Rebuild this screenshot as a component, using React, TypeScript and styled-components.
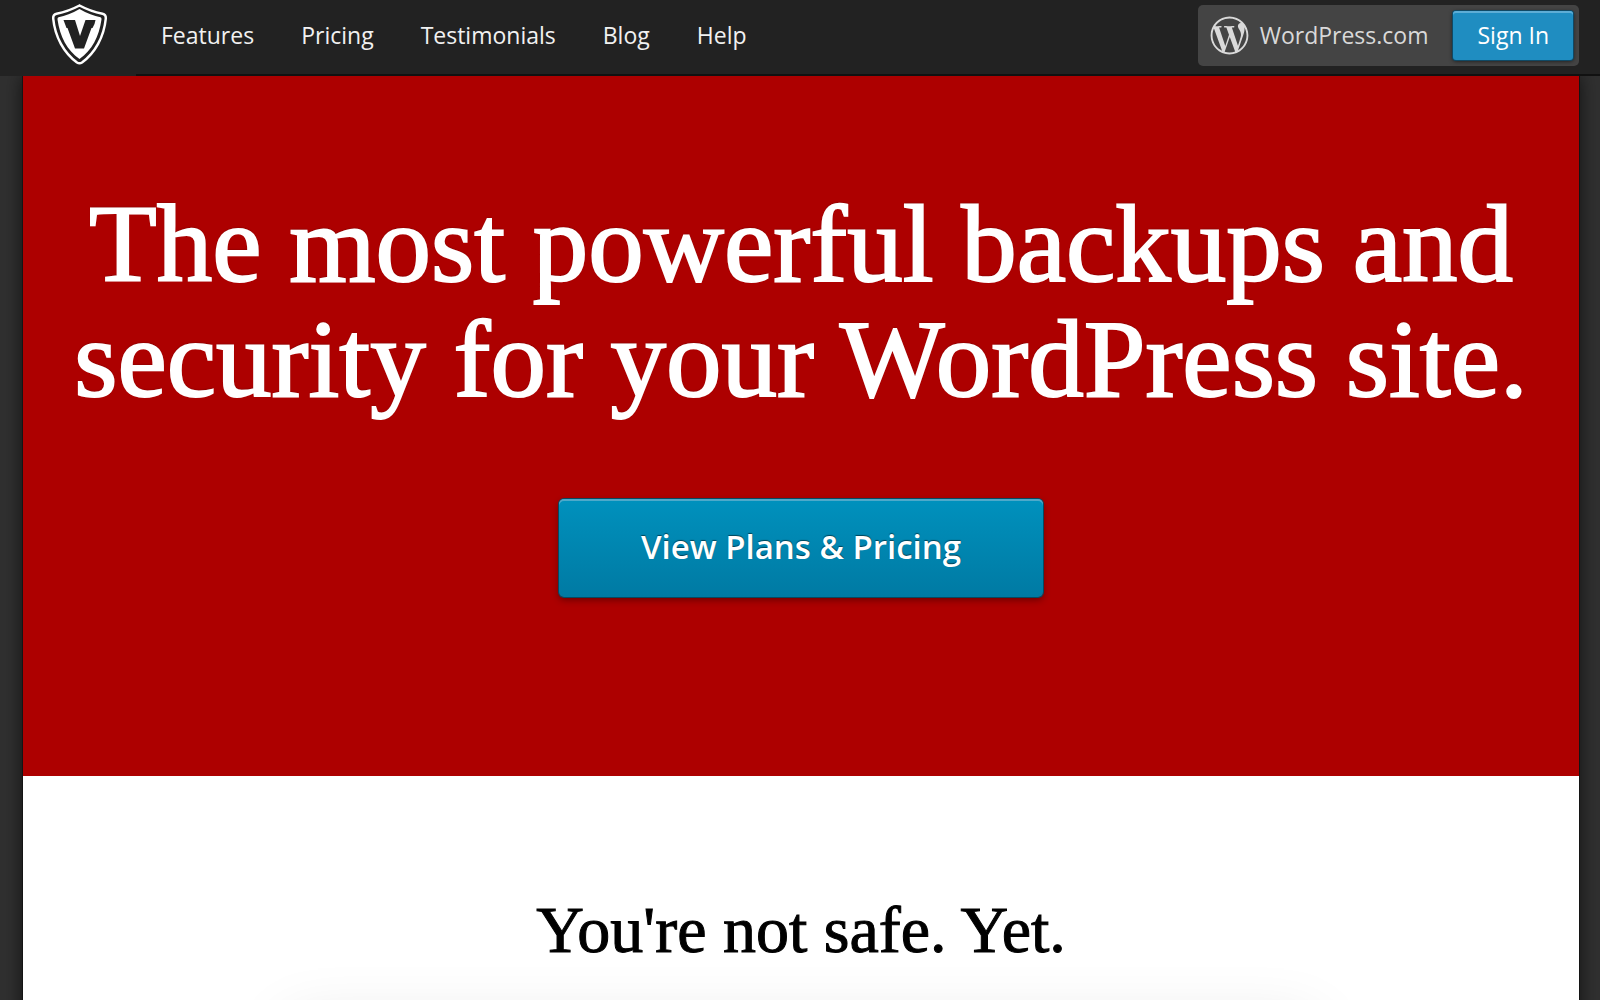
import React from "react";
import styled, { createGlobalStyle } from "styled-components";
import { FaWordpressSimple } from "react-icons/fa";

const sans = `"Open Sans", "Noto Sans", sans-serif`;
const serif = `"Liberation Serif", "Times New Roman", serif`;

const GlobalStyle = createGlobalStyle`
  *, *::before, *::after { box-sizing: border-box; }
  body {
    margin: 0;
    background: #303030;
    font-family: ${sans};
  }
`;

const Page = styled.div`
  display: flex;
  flex-direction: column;
  height: 100vh;
  overflow: hidden;
`;

const Header = styled.header`
  display: flex;
  flex: none;
  align-items: flex-start;
  height: 76px;
  background: #222;
`;

const LogoLink = styled.a`
  display: flex;
  flex: none;
  width: 136px;
  height: 76px;
  padding: 4px 0 0 51px;
`;

const Bar = styled.div`
  display: flex;
  flex: 1;
  justify-content: space-between;
  height: 76px;
  padding-right: 21px;
  border-bottom: 2px solid #111;
`;

const Nav = styled.nav`
  display: flex;
  gap: 47px;
  padding-left: 25px;
`;

const NavLink = styled.a`
  color: #f1f1f1;
  font-size: 23px;
  line-height: 70px;
  text-decoration: none;
`;

const Account = styled.div`
  display: flex;
  align-items: center;
  gap: 11px;
  height: 61px;
  margin-top: 5px;
  padding: 0 6px 0 12px;
  border-radius: 5px;
  background: #444;
  color: #d9d9d9;
  font-size: 23px;
  line-height: 32px;
`;

const AccountName = styled.span`
  padding-bottom: 2px;
`;

const SignIn = styled.button`
  height: 49px;
  margin-left: 14px;
  padding: 0 24px 2px;
  border: 0;
  border-radius: 3px;
  background: #1f8dc1;
  box-shadow: inset 0 2px 0 #5cadd6, 0 0 0 1px #0f4965, 0 1px 4px rgba(0, 0, 0, 0.7);
  color: #fff;
  font: 400 23px/46px ${sans};
  cursor: pointer;
`;

const Panel = styled.main`
  flex: 1;
  margin: 0 21px 0 23px;
  background: #fff;
  box-shadow: 0 0 0 1px #141414, 0 0 18px rgba(0, 0, 0, 0.7);
  clip-path: inset(0 -24px);
  text-align: center;
`;

const Hero = styled.section`
  height: 700px;
  padding: 110px 24px 0;
  background: #ad0000;
`;

const Title = styled.h1`
  margin: 0 0 83px;
  color: #fff;
  font: 400 111px/115px ${serif};
  -webkit-text-stroke: 2px #fff;
  text-shadow: 0 -1px 2px rgba(0, 0, 0, 0.4);
`;

const PlansButton = styled.button`
  height: 98px;
  padding: 0 82px 2px;
  border: 0;
  border-radius: 5px;
  background: linear-gradient(#0091bd, #007aa3);
  box-shadow: inset 0 2px 0 #4da9ca, 0 0 0 1px #064a61, 0 3px 7px rgba(0, 0, 0, 0.4);
  color: #fff;
  font: 600 33px/94px ${sans};
  text-shadow: 0 -1px 1px rgba(0, 0, 0, 0.5);
  cursor: pointer;
`;

const Safety = styled.section`
  padding: 114px 24px 0;
`;

const Subtitle = styled.h2`
  margin: 0;
  color: #000;
  font: 400 66px/80px ${serif};
  -webkit-text-stroke: 1px #000;
`;

const Showcase = styled.div`
  width: 68%;
  height: 400px;
  margin: 54px auto 0;
  background: #fff;
  box-shadow: 0 0 60px rgba(0, 0, 0, 0.12);
`;

const Shield = () => (
  <svg width="58" height="62" viewBox="0 0 58 62" aria-hidden="true">
    <path
      d="M28.500 1.500 C20 6 12 8.500 5.500 9.800 Q2 10.500 2.200 14.500 C4 33 13 49 26 58.500 Q28.500 60 31 58.500 C44 49 53 33 54.800 14.500 Q55 10.500 51.500 9.800 C45 8.500 37 6 28.500 1.500Z"
      fill="#222"
      stroke="#fff"
      strokeWidth="2.500"
    />
    <path
      d="M28.500 5 C21 9.500 14 11.800 7.500 13.200 Q6.300 13.600 6.500 15.500 C9 33 16 46 28.500 55 C41 46 48 33 50.500 15.500 Q50.700 13.600 49.500 13.200 C43 11.800 36 9.500 28.500 5Z"
      fill="#fff"
    />
    <path
      d="M12.500 16 H24 L29 32 L34.500 16 H44.500 L43.500 20 L41.500 24 H40.500 L33 44.500 H24 L16.500 24 H15.500 L14 20Z"
      fill="#222"
    />
  </svg>
);

const links = ["Features", "Pricing", "Testimonials", "Blog", "Help"];

export default function App() {
  return (
    <Page>
      <GlobalStyle />
      <Header>
        <LogoLink href="#" aria-label="Home">
          <Shield />
        </LogoLink>
        <Bar>
          <Nav>
            {links.map((label) => (
              <NavLink key={label} href="#">
                {label}
              </NavLink>
            ))}
          </Nav>
          <Account>
            <FaWordpressSimple size={39} aria-hidden="true" />
            <AccountName>WordPress.com</AccountName>
            <SignIn type="button">Sign In</SignIn>
          </Account>
        </Bar>
      </Header>
      <Panel>
        <Hero>
          <Title>
            The most powerful backups and
            <br />
            security for your WordPress site.
          </Title>
          <PlansButton type="button">View Plans &amp; Pricing</PlansButton>
        </Hero>
        <Safety>
          <Subtitle>You're not safe. Yet.</Subtitle>
          <Showcase />
        </Safety>
      </Panel>
    </Page>
  );
}
